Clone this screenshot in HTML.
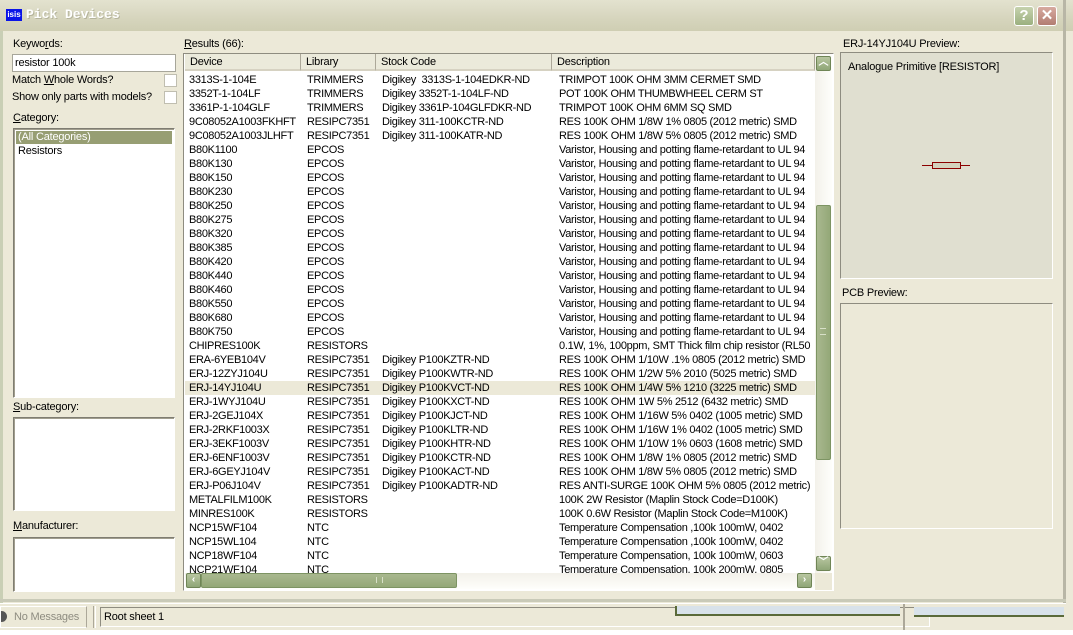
<!DOCTYPE html>
<html><head><meta charset="utf-8"><style>
*{margin:0;padding:0;box-sizing:border-box}
body{width:1073px;height:635px;overflow:hidden;background:#ECE9D8;font-family:"Liberation Sans",sans-serif;font-size:11px;color:#000;position:relative}
.a{position:absolute}
.lbl{position:absolute;font-size:11px;white-space:nowrap;letter-spacing:-0.2px}
.sunk{position:absolute;background:#fff;border:1px solid;border-color:#7f7d72 #fff #fff #7f7d72;box-shadow:inset 1px 1px 0 #a19e8e}
.row{position:absolute;left:0;height:14px;width:630px;white-space:nowrap;line-height:14px;letter-spacing:-0.3px}
.row span{position:absolute;top:0}
.c1{left:4px}.c2{left:122px}.c3{left:197px}.c4{left:374px}
.hd{position:absolute;top:0;height:17px;background:#EBEADB;border-right:1px solid #ACA899;border-bottom:2px solid #D6D2C2;line-height:17px;padding-left:5px;letter-spacing:-0.2px}
.btn{position:absolute;background:linear-gradient(#b8c6a0,#8fa677);border:1px solid #6f8556;border-radius:2px;color:#fff;font-weight:bold;text-align:center;font-size:10px;line-height:12px}
</style></head><body>
<div class="a" style="left:0;top:0;width:1073px;height:31px;background:linear-gradient(#e3e2cf,#d6d5bd 60%,#cfceb3)"></div>
<div class="a" style="left:6px;top:9px;width:16px;height:12px;background:#0a14e8;color:#fff;font-size:8px;line-height:12px;text-align:center;font-weight:bold">isis</div>
<div class="a" style="left:26px;top:7px;color:#fff;font-family:'Liberation Mono',monospace;font-weight:bold;font-size:13px;text-shadow:1px 1px 0 #b5b49c">Pick Devices</div>
<div class="a" style="left:1014px;top:6px;width:20px;height:20px;background:linear-gradient(#c6d2ae,#9bb07f);border:1px solid #fff;border-radius:3px;color:#fff;font-weight:bold;font-size:15px;text-align:center;line-height:18px">?</div>
<div class="a" style="left:1037px;top:6px;width:20px;height:20px;background:linear-gradient(#d7aaa0,#b27d72);border:1px solid #fff;border-radius:3px;color:#fff;font-weight:bold;font-size:15px;text-align:center;line-height:18px">✕</div>
<div class="a" style="left:0;top:31px;width:3px;height:572px;background:#c9cfb5"></div>
<div class="a" style="left:1063px;top:0;width:3px;height:603px;background:#b8b6a6"></div>
<div class="a" style="left:0;top:599px;width:1066px;height:3px;background:#c9cab8"></div>

<div class="lbl" style="left:13px;top:38px">Keywo<u>r</u>ds:</div>
<div class="sunk" style="left:12px;top:54px;width:164px;height:18px;box-shadow:none;border-color:#a7a69a"><div style="padding:2px 2px;line-height:13px;letter-spacing:-0.2px">resistor 100k</div></div>
<div class="lbl" style="left:12px;top:74px">Match <u>W</u>hole Words?</div>
<div class="a" style="left:164px;top:74px;width:13px;height:13px;background:#fff;border:1px solid #c0beb0"></div>
<div class="lbl" style="left:12px;top:91px">Show only parts with models?</div>
<div class="a" style="left:164px;top:91px;width:13px;height:13px;background:#fff;border:1px solid #c0beb0"></div>
<div class="lbl" style="left:13px;top:112px"><u>C</u>ategory:</div>
<div class="sunk" style="left:13px;top:128px;width:162px;height:270px">
 <div style="position:absolute;left:2px;top:2px;width:156px;height:13px;background:#979e73;color:#fff;padding-left:2px;line-height:13px;letter-spacing:-0.2px">(All Categories)</div>
 <div style="position:absolute;left:4px;top:15px;line-height:14px;letter-spacing:-0.2px">Resistors</div>
</div>
<div class="lbl" style="left:13px;top:401px"><u>S</u>ub-category:</div>
<div class="sunk" style="left:13px;top:417px;width:162px;height:94px"></div>
<div class="lbl" style="left:13px;top:520px"><u>M</u>anufacturer:</div>
<div class="sunk" style="left:13px;top:537px;width:162px;height:55px"></div>

<div class="lbl" style="left:184px;top:38px"><u>R</u>esults (66):</div>
<div class="a" style="left:183px;top:53px;width:651px;height:538px;background:#fff;border:1px solid;border-color:#8e8c80 #fff #fff #8e8c80;overflow:hidden">
 <div class="hd" style="left:1px;width:116px">Device</div>
 <div class="hd" style="left:117px;width:75px">Library</div>
 <div class="hd" style="left:192px;width:176px">Stock Code</div>
 <div class="hd" style="left:368px;width:263px">Description</div>
 <div style="position:absolute;left:1px;top:19px;width:630px;height:500px;overflow:hidden">
<div class="row" style="top:0"><span class="c1">3313S-1-104E</span><span class="c2">TRIMMERS</span><span class="c3">Digikey&nbsp; 3313S-1-104EDKR-ND</span><span class="c4">TRIMPOT 100K OHM 3MM CERMET SMD</span></div>
<div class="row" style="top:14px"><span class="c1">3352T-1-104LF</span><span class="c2">TRIMMERS</span><span class="c3">Digikey 3352T-1-104LF-ND</span><span class="c4">POT 100K OHM THUMBWHEEL CERM ST</span></div>
<div class="row" style="top:28px"><span class="c1">3361P-1-104GLF</span><span class="c2">TRIMMERS</span><span class="c3">Digikey 3361P-104GLFDKR-ND</span><span class="c4">TRIMPOT 100K OHM 6MM SQ SMD</span></div>
<div class="row" style="top:42px"><span class="c1">9C08052A1003FKHFT</span><span class="c2">RESIPC7351</span><span class="c3">Digikey 311-100KCTR-ND</span><span class="c4">RES 100K OHM 1/8W 1% 0805 (2012 metric) SMD</span></div>
<div class="row" style="top:56px"><span class="c1">9C08052A1003JLHFT</span><span class="c2">RESIPC7351</span><span class="c3">Digikey 311-100KATR-ND</span><span class="c4">RES 100K OHM 1/8W 5% 0805 (2012 metric) SMD</span></div>
<div class="row" style="top:70px"><span class="c1">B80K1100</span><span class="c2">EPCOS</span><span class="c4">Varistor, Housing and potting flame-retardant to UL 94</span></div>
<div class="row" style="top:84px"><span class="c1">B80K130</span><span class="c2">EPCOS</span><span class="c4">Varistor, Housing and potting flame-retardant to UL 94</span></div>
<div class="row" style="top:98px"><span class="c1">B80K150</span><span class="c2">EPCOS</span><span class="c4">Varistor, Housing and potting flame-retardant to UL 94</span></div>
<div class="row" style="top:112px"><span class="c1">B80K230</span><span class="c2">EPCOS</span><span class="c4">Varistor, Housing and potting flame-retardant to UL 94</span></div>
<div class="row" style="top:126px"><span class="c1">B80K250</span><span class="c2">EPCOS</span><span class="c4">Varistor, Housing and potting flame-retardant to UL 94</span></div>
<div class="row" style="top:140px"><span class="c1">B80K275</span><span class="c2">EPCOS</span><span class="c4">Varistor, Housing and potting flame-retardant to UL 94</span></div>
<div class="row" style="top:154px"><span class="c1">B80K320</span><span class="c2">EPCOS</span><span class="c4">Varistor, Housing and potting flame-retardant to UL 94</span></div>
<div class="row" style="top:168px"><span class="c1">B80K385</span><span class="c2">EPCOS</span><span class="c4">Varistor, Housing and potting flame-retardant to UL 94</span></div>
<div class="row" style="top:182px"><span class="c1">B80K420</span><span class="c2">EPCOS</span><span class="c4">Varistor, Housing and potting flame-retardant to UL 94</span></div>
<div class="row" style="top:196px"><span class="c1">B80K440</span><span class="c2">EPCOS</span><span class="c4">Varistor, Housing and potting flame-retardant to UL 94</span></div>
<div class="row" style="top:210px"><span class="c1">B80K460</span><span class="c2">EPCOS</span><span class="c4">Varistor, Housing and potting flame-retardant to UL 94</span></div>
<div class="row" style="top:224px"><span class="c1">B80K550</span><span class="c2">EPCOS</span><span class="c4">Varistor, Housing and potting flame-retardant to UL 94</span></div>
<div class="row" style="top:238px"><span class="c1">B80K680</span><span class="c2">EPCOS</span><span class="c4">Varistor, Housing and potting flame-retardant to UL 94</span></div>
<div class="row" style="top:252px"><span class="c1">B80K750</span><span class="c2">EPCOS</span><span class="c4">Varistor, Housing and potting flame-retardant to UL 94</span></div>
<div class="row" style="top:266px"><span class="c1">CHIPRES100K</span><span class="c2">RESISTORS</span><span class="c4">0.1W, 1%, 100ppm, SMT Thick film chip resistor (RL50</span></div>
<div class="row" style="top:280px"><span class="c1">ERA-6YEB104V</span><span class="c2">RESIPC7351</span><span class="c3">Digikey P100KZTR-ND</span><span class="c4">RES 100K OHM 1/10W .1% 0805 (2012 metric) SMD</span></div>
<div class="row" style="top:294px"><span class="c1">ERJ-12ZYJ104U</span><span class="c2">RESIPC7351</span><span class="c3">Digikey P100KWTR-ND</span><span class="c4">RES 100K OHM 1/2W 5% 2010 (5025 metric) SMD</span></div>
<div class="row" style="top:308px;background:#ECE9D8"><span class="c1">ERJ-14YJ104U</span><span class="c2">RESIPC7351</span><span class="c3">Digikey P100KVCT-ND</span><span class="c4">RES 100K OHM 1/4W 5% 1210 (3225 metric) SMD</span></div>
<div class="row" style="top:322px"><span class="c1">ERJ-1WYJ104U</span><span class="c2">RESIPC7351</span><span class="c3">Digikey P100KXCT-ND</span><span class="c4">RES 100K OHM 1W 5% 2512 (6432 metric) SMD</span></div>
<div class="row" style="top:336px"><span class="c1">ERJ-2GEJ104X</span><span class="c2">RESIPC7351</span><span class="c3">Digikey P100KJCT-ND</span><span class="c4">RES 100K OHM 1/16W 5% 0402 (1005 metric) SMD</span></div>
<div class="row" style="top:350px"><span class="c1">ERJ-2RKF1003X</span><span class="c2">RESIPC7351</span><span class="c3">Digikey P100KLTR-ND</span><span class="c4">RES 100K OHM 1/16W 1% 0402 (1005 metric) SMD</span></div>
<div class="row" style="top:364px"><span class="c1">ERJ-3EKF1003V</span><span class="c2">RESIPC7351</span><span class="c3">Digikey P100KHTR-ND</span><span class="c4">RES 100K OHM 1/10W 1% 0603 (1608 metric) SMD</span></div>
<div class="row" style="top:378px"><span class="c1">ERJ-6ENF1003V</span><span class="c2">RESIPC7351</span><span class="c3">Digikey P100KCTR-ND</span><span class="c4">RES 100K OHM 1/8W 1% 0805 (2012 metric) SMD</span></div>
<div class="row" style="top:392px"><span class="c1">ERJ-6GEYJ104V</span><span class="c2">RESIPC7351</span><span class="c3">Digikey P100KACT-ND</span><span class="c4">RES 100K OHM 1/8W 5% 0805 (2012 metric) SMD</span></div>
<div class="row" style="top:406px"><span class="c1">ERJ-P06J104V</span><span class="c2">RESIPC7351</span><span class="c3">Digikey P100KADTR-ND</span><span class="c4">RES ANTI-SURGE 100K OHM 5% 0805 (2012 metric)</span></div>
<div class="row" style="top:420px"><span class="c1">METALFILM100K</span><span class="c2">RESISTORS</span><span class="c4">100K 2W Resistor (Maplin Stock Code=D100K)</span></div>
<div class="row" style="top:434px"><span class="c1">MINRES100K</span><span class="c2">RESISTORS</span><span class="c4">100K 0.6W Resistor (Maplin Stock Code=M100K)</span></div>
<div class="row" style="top:448px"><span class="c1">NCP15WF104</span><span class="c2">NTC</span><span class="c4">Temperature Compensation ,100k 100mW, 0402</span></div>
<div class="row" style="top:462px"><span class="c1">NCP15WL104</span><span class="c2">NTC</span><span class="c4">Temperature Compensation ,100k 100mW, 0402</span></div>
<div class="row" style="top:476px"><span class="c1">NCP18WF104</span><span class="c2">NTC</span><span class="c4">Temperature Compensation, 100k 100mW, 0603</span></div>
<div class="row" style="top:490px"><span class="c1">NCP21WF104</span><span class="c2">NTC</span><span class="c4">Temperature Compensation, 100k 200mW, 0805</span></div>
 </div>
 <div style="position:absolute;left:631px;top:0;width:17px;height:519px;background:linear-gradient(90deg,#f3f1ea,#fefefb)"></div>
 <div class="btn" style="left:632px;top:2px;width:15px;height:15px">︿</div>
 <div style="position:absolute;left:632px;top:151px;width:15px;height:255px;background:linear-gradient(90deg,#a9b88f,#94a878);border:1px solid #7d9463;border-radius:2px"></div>
 <div style="position:absolute;left:636px;top:274px;width:6px;height:7px;border-top:1px solid #d8e0c8;border-bottom:1px solid #d8e0c8"></div>
 <div class="btn" style="left:632px;top:502px;width:15px;height:15px">﹀</div>
 <div style="position:absolute;left:1px;top:519px;width:630px;height:16px;background:linear-gradient(#f3f1ea,#fefefb)"></div>
 <div class="btn" style="left:2px;top:519px;width:15px;height:15px">‹</div>
 <div style="position:absolute;left:17px;top:519px;width:256px;height:15px;background:linear-gradient(#a9b88f,#94a878);border:1px solid #7d9463;border-radius:2px"></div>
 <div style="position:absolute;left:192px;top:523px;width:7px;height:6px;border-left:1px solid #d8e0c8;border-right:1px solid #d8e0c8"></div>
 <div class="btn" style="left:613px;top:519px;width:15px;height:15px">›</div>
 <div style="position:absolute;left:631px;top:519px;width:17px;height:17px;background:#ECE9D8"></div>
</div>

<div class="lbl" style="left:843px;top:38px">ERJ-14YJ104U Preview:</div>
<div class="a" style="left:840px;top:52px;width:213px;height:227px;background:#E0DFD0;border:1px solid;border-color:#8e8c80 #fff #fff #8e8c80"></div>
<div class="lbl" style="left:848px;top:61px">Analogue Primitive [RESISTOR]</div>
<div class="a" style="left:922px;top:165px;width:48px;height:1px;background:#8b0000"></div>
<div class="a" style="left:932px;top:162px;width:29px;height:7px;background:#D4D2BE;border:1px solid #8b0000"></div>
<div class="lbl" style="left:842px;top:287px">PCB Preview:</div>
<div class="a" style="left:840px;top:303px;width:213px;height:226px;background:#ECE9D8;border:1px solid;border-color:#8e8c80 #fff #fff #8e8c80"></div>

<div class="a" style="left:0;top:603px;width:1073px;height:27px;background:#ECE9D8;border-top:1px solid #fff"></div>
<div class="a" style="left:-4px;top:611px;width:11px;height:11px;border-radius:50%;background:#555"></div>
<div class="a" style="left:0;top:606px;width:87px;height:22px;border:1px solid #fff;border-right-color:#aca899"></div>
<div class="lbl" style="left:14px;top:611px;color:#8e8c80">No Messages</div>
<div class="a" style="left:93px;top:606px;width:3px;height:22px;border-left:1px solid #aca899;border-right:1px solid #fff"></div>
<div class="a" style="left:100px;top:607px;width:830px;height:20px;border:1px solid;border-color:#8e8c80 #fff #fff #8e8c80"></div>
<div class="lbl" style="left:104px;top:611px">Root sheet 1</div>
<div class="a" style="left:675px;top:606px;width:225px;height:10px;background:#d8e2ea;border-bottom:2px solid #5a6a3a;border-left:2px solid #5a6a3a"></div>
<div class="a" style="left:903px;top:604px;width:2px;height:26px;background:#aca899"></div>
<div class="a" style="left:914px;top:607px;width:150px;height:10px;background:#d8e2ea;border-bottom:2px solid #5a6a3a"></div>
<div class="a" style="left:1066px;top:600px;width:7px;height:35px;background:#ECE9D8"></div>
<div class="a" style="left:0;top:630px;width:1073px;height:5px;background:#fff"></div>
</body></html>
